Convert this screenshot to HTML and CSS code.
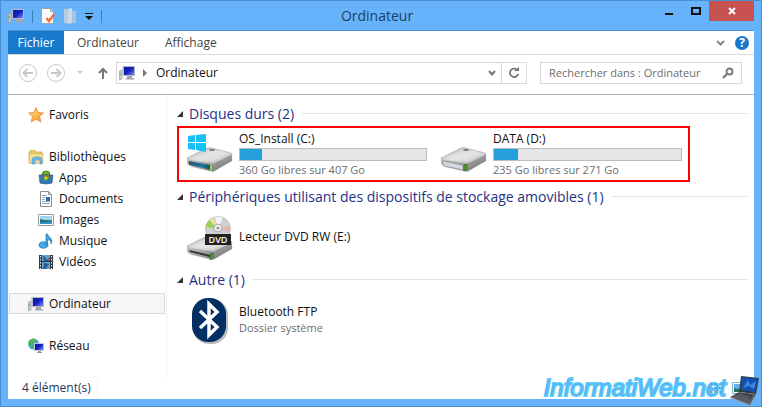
FILE: index.html
```
<!DOCTYPE html>
<html lang="fr">
  <head>
    <meta charset="UTF-8" />
    <meta name="viewport" content="width=device-width, initial-scale=1.0" />
    <title>Ordinateur</title>
    <link rel="stylesheet" href="styles.css">
  </head>
  <body>
    <!-- Shared icons -->
    <svg class="defs" aria-hidden="true">
      <defs>
        <linearGradient id="screen" x1="0" y1="0" x2="1" y2="1">
          <stop offset="0" stop-color="#0a1c9c" />
          <stop offset="0.5" stop-color="#1420c4" />
          <stop offset="1" stop-color="#7c8cf0" />
        </linearGradient>
        <linearGradient id="metal" x1="0" y1="0" x2="1" y2="1">
          <stop offset="0" stop-color="#a8a8a8" />
          <stop offset="0.5" stop-color="#e4e4e4" />
          <stop offset="1" stop-color="#b4b4b4" />
        </linearGradient>
        <linearGradient id="side" x1="0" y1="0" x2="1" y2="1">
          <stop offset="0" stop-color="#d0d0d0" />
          <stop offset="1" stop-color="#6c6c6c" />
        </linearGradient>
        <linearGradient id="glass" x1="0" y1="0" x2="1" y2="0">
          <stop offset="0" stop-color="#2b5468" />
          <stop offset="0.6" stop-color="#1878a0" />
          <stop offset="1" stop-color="#184838" />
        </linearGradient>
        <linearGradient id="gold" x1="0" y1="0" x2="1" y2="1">
          <stop offset="0" stop-color="#ffe98a" />
          <stop offset="1" stop-color="#f78c1e" />
        </linearGradient>
      </defs>
      <symbol id="pc" viewBox="0 0 16 16">
        <rect x="3.500" y="1" width="12.500" height="10" fill="#b4b8c0" />
        <rect x="5" y="2" width="10" height="8" fill="url(#screen)" />
        <path d="M8 11h5v2h2v1.500H7V13h1z" fill="#a0a4ac" />
        <path d="M.5 6 3 5v9L.5 15z" fill="#c8ccd0" stroke="#888" stroke-width=".5" />
        <path d="M1 8v2" stroke="#3cb43c" />
      </symbol>
      <symbol id="drive" viewBox="0 0 48 26">
        <path d="M4 20 28 25 47 13 45 9z" fill="#ccc" opacity=".7" />
        <path d="M1 11 21 1Q23 0 26 1L45 6Q47 7 45 9L29 16Q27 17 24 16L3 13Q1 12 1 11z" fill="url(#metal)" stroke="#999" stroke-width=".5" />
        <path d="M1 11.500Q2 13 6 13.500L25 16.500Q28 17 30 15.500L46 7.500V14L29 23.500Q27 25 24 24L4 19Q1 18 1 16z" fill="url(#side)" />
        <path d="M6 11 23 2.500 41 7 27 14z" fill="#e4e4e4" opacity=".65" />
        <ellipse cx="26" cy="3" rx="3" ry="1" fill="#777" />
      </symbol>
    </svg>

    <div class="window">
      <header class="titlebar">
        <div class="quick-access">
          <svg width="16" height="16"><use href="#pc" /></svg>
          <span class="separator"></span>
          <button type="button" aria-label="Propriétés">
            <svg width="14" height="16" viewBox="0 0 14 16">
              <path d="M.5.500h9l3 3v12H.5z" fill="#fafafa" stroke="#98a4b0" />
              <path d="M9.500.500v3h3" fill="#ddd" stroke="#98a4b0" />
              <path d="M5.500 10 8 13 13 6.500" fill="none" stroke="#f07038" stroke-width="2.500" />
            </svg>
          </button>
          <button type="button" aria-label="Nouveau dossier">
            <svg width="14" height="16" viewBox="0 0 14 16">
              <path d="M1 1h5v14H1z" fill="#b9cbdf" />
              <path d="M5 1 9 0v15l-4 1z" fill="#cbdaea" />
              <path d="M9 3h4v12H9z" fill="#a9c3df" />
            </svg>
          </button>
          <button type="button" aria-label="Personnaliser">
            <svg width="8" height="7" viewBox="0 0 8 7">
              <path d="M0 0h8v1H0zM0 3h8L4 7z" fill="#111" />
            </svg>
          </button>
          <span class="separator"></span>
        </div>
        <h1>Ordinateur</h1>
        <div class="window-buttons">
          <button type="button" aria-label="Réduire">
            <svg width="8" height="10"><path d="M0 7h8v2H0z" fill="#111" /></svg>
          </button>
          <button type="button" aria-label="Agrandir">
            <svg width="10" height="8"><path d="M1 1h8v6H1z" fill="none" stroke="#111" stroke-width="2" /></svg>
          </button>
          <button type="button" class="close" aria-label="Fermer">
            <svg width="8" height="8" viewBox="0 0 8 8"><path d="m1 1 6 6M7 1 1 7" stroke="#fff" stroke-width="2" /></svg>
          </button>
        </div>
      </header>

      <div class="client">
        <nav class="ribbon">
          <button type="button" class="file">Fichier</button>
          <button type="button" class="tab">Ordinateur</button>
          <button type="button" class="tab">Affichage</button>
          <button type="button" class="expand" aria-label="Développer le ruban">
            <svg width="9" height="6" viewBox="0 0 9 6"><path d="m1 1 3.500 3.500L8 1" fill="none" stroke="#888" stroke-width="2" /></svg>
          </button>
          <button type="button" class="help" aria-label="Aide">?</button>
        </nav>

        <div class="toolbar">
          <button type="button" aria-label="Précédent">
            <svg width="20" height="20" viewBox="0 0 20 20" fill="none" stroke="#c8c8c8">
              <circle cx="10" cy="10" r="8.500" />
              <path d="M15 10H6M9.500 6 5.500 10l4 4" stroke-width="2" />
            </svg>
          </button>
          <button type="button" aria-label="Suivant">
            <svg width="20" height="20" viewBox="0 0 20 20" fill="none" stroke="#c8c8c8">
              <circle cx="10" cy="10" r="8.500" />
              <path d="M5 10h9M10.500 6l4 4-4 4" stroke-width="2" />
            </svg>
          </button>
          <button type="button" class="recent" aria-label="Emplacements récents">
            <svg width="8" height="4"><path d="M1 0h6L4 3z" fill="#c8c8c8" /></svg>
          </button>
          <button type="button" aria-label="Niveau supérieur">
            <svg width="10" height="12" viewBox="0 0 10 12"><path d="M5 12V2M1 6l4-4 4 4" fill="none" stroke="#777" stroke-width="2" /></svg>
          </button>
          <div class="address">
            <svg width="16" height="16"><use href="#pc" /></svg>
            <svg width="5" height="8"><path d="M0 0v8l4-4z" fill="#777" /></svg>
            <a href="#">Ordinateur</a>
            <button type="button" aria-label="Adresses précédentes">
              <svg width="8" height="7" viewBox="0 0 8 7"><path d="m1 1 3 3.500L7 1" fill="none" stroke="#777" stroke-width="2" /></svg>
            </button>
            <button type="button" class="refresh" aria-label="Actualiser">
              <svg width="12" height="12" viewBox="0 0 12 12">
                <path d="M8.500 2.300A4.200 4.200 0 1 0 10.200 7" fill="none" stroke="#777" stroke-width="1.800" />
                <path d="M6 4h5V0z" fill="#777" />
              </svg>
            </button>
          </div>
          <div class="search">
            <input type="text" aria-label="Rechercher" placeholder="Rechercher dans : Ordinateur" />
            <svg width="12" height="12" viewBox="0 0 12 12" fill="none" stroke="#777">
              <circle cx="7.500" cy="4.500" r="3" stroke-width="1.800" />
              <path d="M5.500 6.500 1 11" stroke-width="2.200" />
            </svg>
          </div>
        </div>

        <div class="content">
          <aside>
            <ul>
              <li>
                <a href="#">
                  <svg width="16" height="16" viewBox="0 0 16 16"><path d="M8 .5 10.200 5.500l5.300.5-4 3.500 1.500 5.500L8 12.200 3.200 15l1.300-5.500-4-3.500 5.300-.5z" fill="url(#gold)" stroke="#ee8434" stroke-width=".8" /></svg>
                  Favoris
                </a>
              </li>
            </ul>
            <ul>
              <li>
                <a href="#">
                  <svg width="16" height="16" viewBox="0 0 16 16">
                    <path d="M1 3 2 1.500h5L8 3h6v11H1z" fill="#ecc968" stroke="#c49c40" stroke-width=".6" />
                    <path d="M2 5h13v9H1z" fill="#f6e29c" stroke="#d4b058" stroke-width=".6" />
                    <path d="M4 15v-4q0-3 4-3h3q3 0 3 3v4h-2v-4H7v4z" fill="#70b8e8" stroke="#4490cc" stroke-width=".6" />
                  </svg>
                  Bibliothèques
                </a>
              </li>
              <li class="sub">
                <a href="#">
                  <svg width="16" height="16" viewBox="0 0 16 16">
                    <path d="M4 5q0-4 4-4t4 4z" fill="#76b82c" stroke="#437c24" />
                    <path d="M1 5h14l-1 8q-6 2-12 0z" fill="#3478b4" stroke="#205888" stroke-width=".6" />
                    <path d="m8 5 4 3-4 3-4-3z" fill="#46a032" />
                    <circle cx="8" cy="8" r="1.500" fill="#f4d434" />
                    <path d="M5 5h2v2H5zM9 5h2v2H9z" fill="#d05028" />
                  </svg>
                  Apps
                </a>
              </li>
              <li class="sub">
                <a href="#">
                  <svg width="16" height="16" viewBox="0 0 16 16">
                    <path d="M2.500.500h8l3 3v12h-11z" fill="#fff" stroke="#8c8c8c" />
                    <path d="M10.500.500v3h3" fill="none" stroke="#8c8c8c" />
                    <path d="M4 4.500h5M4 6.500h3M4 8.500h3M4 10.500h8M4 12.500h8" stroke="#98a8b8" />
                    <path d="M8 6h4v4H8z" fill="#2868a8" />
                  </svg>
                  Documents
                </a>
              </li>
              <li class="sub">
                <a href="#">
                  <svg width="16" height="16" viewBox="0 0 16 16">
                    <path d="M.5 2.500h15v11H.5z" fill="#fff" stroke="#999" />
                    <path d="M2 4h12v8H2z" fill="#a0d4ec" />
                    <path d="M2 7q6 2 12 1v4H2z" fill="#24706c" />
                    <path d="M2 10q6 1 12-1v3H2z" fill="#2c94cc" />
                  </svg>
                  Images
                </a>
              </li>
              <li class="sub">
                <a href="#">
                  <svg width="16" height="16" viewBox="0 0 16 16">
                    <ellipse cx="5.500" cy="12" rx="4.500" ry="3.200" fill="#44a8e4" stroke="#2474b8" stroke-width=".7" />
                    <path d="M8 1h1.500q.5 2.500 3 4 2.500 2.500.5 6 .5-3.500-3.500-4.500V12H8z" fill="#44a8e4" stroke="#2474b8" stroke-width=".7" />
                  </svg>
                  Musique
                </a>
              </li>
              <li class="sub">
                <a href="#">
                  <svg width="16" height="16" viewBox="0 0 16 16">
                    <path d="M1 1h14v14H1z" fill="#303840" />
                    <path d="M4 1h8v6H4zM4 8h8v7H4z" fill="#5ca4d4" />
                    <path d="M5 2q3 0 3 4l4-3v4H6zM6 9l5 1-3 5H5z" fill="#245c90" />
                    <path d="m9 4 3 1-2 2zM9 11l2 2-2 1z" fill="#cc684c" />
                    <path d="M2.500 2v13M13.500 2v13" stroke="#eee" stroke-dasharray="1.500 1.500" />
                  </svg>
                  Vidéos
                </a>
              </li>
            </ul>
            <ul>
              <li class="selected">
                <a href="#"><svg width="16" height="16"><use href="#pc" /></svg>Ordinateur</a>
              </li>
            </ul>
            <ul>
              <li>
                <a href="#">
                  <svg width="16" height="16" viewBox="0 0 16 16">
                    <circle cx="5.500" cy="6" r="5.500" fill="#44a4dc" />
                    <path d="M2 2q4-3 6 0L5 5 3 8 0 6zM5 7l3 1-1 3-3-1z" fill="#54b83c" />
                    <path d="M6 5h10v8H6z" fill="#c4c8d0" />
                    <path d="M7 6h8v6H7z" fill="url(#screen)" />
                    <path d="M10 13h3v1h1v1H9v-1h1z" fill="#999" />
                  </svg>
                  Réseau
                </a>
              </li>
            </ul>
          </aside>

          <main>
            <section>
              <h2>Disques durs (2)</h2>
              <div class="items highlighted">
                <article class="item">
                  <svg width="48" height="48" viewBox="0 0 48 48">
                    <use href="#drive" y="17" width="48" height="26" />
                    <path d="M3 31 24 35q2 1 2 3v2L4 35q-2-1-1-4z" fill="url(#glass)" />
                    <path d="m24 35 2-1v6l-2 1z" fill="#8cdc20" />
                    <path d="m2 6 7-1v7H2zM10 5l10-1v8H10zM2 13h7v7l-7-1zM10 13h10v9l-10-2z" fill="#18c0f8" />
                  </svg>
                  <div class="details">
                    <h3>OS_Install (C:)</h3>
                    <div class="bar"><span style="width: 12%"></span></div>
                    <p>360 Go libres sur 407 Go</p>
                  </div>
                </article>
                <article class="item">
                  <svg width="48" height="48" viewBox="0 0 48 48">
                    <use href="#drive" y="17" width="48" height="26" />
                    <path d="m3 31 20 4v5L4 36q-2-2-1-5z" fill="#d4d8e0" stroke="#888" stroke-width=".7" />
                    <path d="m24 35 3-1v5l-3 2z" fill="#48a81c" stroke="#333" stroke-width=".5" />
                  </svg>
                  <div class="details">
                    <h3>DATA (D:)</h3>
                    <div class="bar"><span style="width: 13%"></span></div>
                    <p>235 Go libres sur 271 Go</p>
                  </div>
                </article>
              </div>
            </section>

            <section>
              <h2>Périphériques utilisant des dispositifs de stockage amovibles (1)</h2>
              <div class="items">
                <article class="item">
                  <svg width="48" height="48" viewBox="0 0 48 48">
                    <use href="#drive" y="22" width="48" height="26" />
                    <path d="m3 37 21 5v2L4 39z" fill="#333" />
                    <path d="m24 41 3-1v5l-3 2z" fill="#48a81c" stroke="#333" stroke-width=".5" />
                    <circle cx="32" cy="16" r="12.500" fill="#d0d0d0" stroke="#aaa" stroke-width=".6" />
                    <path d="M32 16 19.500 14q1-5 4-7z" fill="#9cd058" />
                    <path d="m32 16-8-9 3-2z" fill="#f0e890" />
                    <path d="m32 16 12-4v7z" fill="#e4b8a8" />
                    <path d="m32 16-3-12q4-1 8 1z" fill="#f4f4f4" />
                    <circle cx="32" cy="15" r="4" fill="#eee" stroke="#aaa" />
                    <circle cx="32" cy="15" r="1.500" fill="#999" />
                    <path d="M19 21h26v11H19z" fill="#222" />
                    <text x="32" y="30" class="disc-label">DVD</text>
                  </svg>
                  <div class="details">
                    <h3>Lecteur DVD RW (E:)</h3>
                  </div>
                </article>
              </div>
            </section>

            <section>
              <h2>Autre (1)</h2>
              <div class="items">
                <article class="item">
                  <svg width="48" height="48" viewBox="0 0 48 48">
                    <rect x="7" y="3" width="35" height="45" rx="16" fill="#bbb" />
                    <rect x="6" y="2" width="34" height="44" rx="16" fill="#042f64" />
                    <path d="m14 15 17 16-8 8V8l8 8-17 16" fill="none" stroke="#fff" stroke-width="3.500" />
                  </svg>
                  <div class="details">
                    <h3>Bluetooth FTP</h3>
                    <p>Dossier système</p>
                  </div>
                </article>
              </div>
            </section>
          </main>
        </div>

        <footer>
          <span>4 élément(s)</span>
          <div class="views">
            <button type="button" aria-label="Détails">
              <svg width="15" height="12" viewBox="0 0 15 12">
                <path d="M1 1h2v2H1zM1 5h2v2H1zM1 9h2v2H1z" fill="#fff" stroke="#555" stroke-width=".7" />
                <path d="M5 2h4M10 2h4M5 6h4M10 6h4M5 10h4M10 10h4" stroke="#222" />
              </svg>
            </button>
            <button type="button" aria-label="Grandes icônes">
              <svg width="15" height="12" viewBox="0 0 15 12">
                <path d="M.5.500h14v11H.5z" fill="#fff" stroke="#7cb4dc" />
                <path d="M2 2h11v8H2z" fill="#68b0e8" />
                <path d="M2 6q6 2 11 1v3H2z" fill="#247058" />
              </svg>
            </button>
          </div>
        </footer>
      </div>

      <div class="watermark">
        <span>InformatiWeb.net</span>
        <svg width="32" height="30" viewBox="0 0 32 30">
          <path d="m12 0 18 2-3 16-17-2z" fill="#303844" />
          <path d="m13 1 16 2-3 13-14-2z" fill="#1450b0" />
          <path d="m14 12 5-8 2 5 6-4-2 8-5-3z" fill="#3c88dc" />
          <path d="m10 16 17 2-6 11-20-8z" fill="#585c64" />
          <path d="m10 17 14 2-3 4-15-4z" fill="#32363c" />
          <path d="m10 18 12 3M8 19l12 3" stroke="#888" stroke-width=".6" />
          <path d="m1 21 20 8 6-11v2l-6 10L1 22z" fill="#989ca4" />
        </svg>
      </div>
    </div>
  </body>
</html>
```

FILE: styles.css
```
* {
  box-sizing: border-box;
}

body {
  margin: 0;
  font-family: "Open Sans", "Noto Sans", sans-serif;
  font-size: 12px;
  line-height: 16px;
  color: #111;
}

h1,
h2,
h3,
p,
ul {
  margin: 0;
  padding: 0;
  font-weight: normal;
}

a {
  color: inherit;
  text-decoration: none;
}

svg {
  display: block;
  flex-shrink: 0;
}

button {
  display: flex;
  align-items: center;
  justify-content: center;
  padding: 0;
  border: none;
  background: none;
  color: inherit;
  font: inherit;
}

.defs {
  position: absolute;
  width: 0;
  height: 0;
}

/* Window frame */
.window {
  position: relative;
  display: flex;
  flex-direction: column;
  min-height: 100vh;
  padding: 0 7px 7px;
  border: 1px solid #4a8fcf;
  background-color: #66b3fc;
}

.titlebar {
  display: grid;
  grid-template-columns: 1fr auto 1fr;
  height: 29px;
}

.titlebar h1 {
  padding-right: 8px;
  font-size: 14px;
  line-height: 30px;
  color: #1d3f60;
}

.quick-access {
  display: flex;
  align-items: center;
  gap: 8px;
}

.separator {
  width: 1px;
  height: 13px;
  background-color: #3f7fbe;
}

.window-buttons {
  display: flex;
  justify-content: flex-end;
  height: 20px;
}

.window-buttons button {
  width: 27px;
}

.window-buttons .close {
  width: 45px;
  background-color: #c75050;
}

.client {
  display: flex;
  flex: 1;
  flex-direction: column;
  border-top: 1px solid #4a94dc;
  background-color: #fff;
}

/* Ribbon tabs */
.ribbon {
  display: flex;
  align-items: center;
  height: 24px;
  padding-right: 5px;
  border-bottom: 1px solid #dadbdc;
  color: #444;
}

.ribbon .file {
  width: 56px;
  height: 23px;
  background-color: #1979ca;
  color: #fff;
}

.ribbon .tab {
  padding: 0 13px;
}

.ribbon .expand {
  margin-left: auto;
}

.ribbon .help {
  width: 14px;
  height: 14px;
  margin-left: 10px;
  border-radius: 50%;
  background-color: #1979ca;
  color: #fff;
  font-weight: bold;
}

/* Navigation and address */
.toolbar {
  display: flex;
  align-items: center;
  gap: 8px;
  height: 40px;
  padding: 0 12px 3px 10px;
  border-bottom: 1px solid #b4b4b4;
}

.toolbar .recent {
  margin: 0 6px 0 2px;
}

.address,
.search {
  display: flex;
  align-items: center;
  height: 22px;
  border: 1px solid #d9d9d9;
}

.address {
  flex: 1;
  gap: 8px;
  padding-left: 2px;
}

.address button {
  margin-left: auto;
}

.address .refresh {
  width: 25px;
  height: 20px;
  margin-left: -3px;
  border-left: 1px solid #d9d9d9;
}

.search {
  flex: 0 0 202px;
  margin-left: 5px;
  padding: 0 7px 0 8px;
}

.search input {
  flex: 1;
  min-width: 0;
  padding: 0;
  border: none;
  outline: none;
  background: none;
  font: inherit;
  font-size: 11px;
}

.search input::placeholder {
  color: #6d6d6d;
  opacity: 1;
}

/* Folder tree */
.content {
  display: flex;
  flex: 1;
}

aside {
  display: flex;
  flex: 0 0 159px;
  flex-direction: column;
  gap: 21px;
  padding: 9px 1px 20px;
  border-right: 1px solid #f2f2f2;
}

aside ul {
  list-style: none;
}

aside a {
  display: flex;
  align-items: center;
  gap: 5px;
  height: 21px;
  padding-left: 19px;
}

aside .sub a {
  padding-left: 29px;
}

aside .selected {
  background-color: #f6f6f6;
  box-shadow: inset 0 0 0 1px #dadada;
}

/* Drives and devices */
main {
  display: flex;
  flex: 1;
  flex-direction: column;
  gap: 3px;
  padding: 7px 7px 20px 10px;
}

h2 {
  display: flex;
  align-items: center;
  height: 24px;
  padding-bottom: 1px;
  font-size: 14px;
  color: #1e3287;
  white-space: nowrap;
}

h2::before {
  content: "";
  margin-right: 6px;
  border-bottom: 6px solid #333;
  border-left: 6px solid transparent;
}

h2::after {
  content: "";
  flex: 1;
  height: 1px;
  margin-left: 8px;
  background-color: #e2e2e2;
}

.items {
  display: flex;
  width: fit-content;
  gap: 6px;
  height: 56px;
  border: 2px solid transparent;
}

.highlighted {
  border-color: #f00;
}

.item {
  display: flex;
  align-items: center;
  gap: 5px;
  width: 248px;
  padding-left: 7px;
}

.highlighted .item:last-child {
  width: 255px;
}

.details {
  width: 189px;
}

.details h3 {
  font-size: 12px;
}

.details p {
  font-size: 11px;
  color: #6d6d6d;
}

.bar {
  height: 13px;
  margin: 1px 0;
  border: 1px solid #bcbcbc;
  background-color: #e6e6e6;
}

.bar span {
  display: block;
  height: 100%;
  background-color: #26a0da;
}

.disc-label {
  fill: #fff;
  font-size: 9px;
  font-weight: 600;
  text-anchor: middle;
}

/* Status bar */
footer {
  display: flex;
  align-items: center;
  justify-content: space-between;
  height: 22px;
  padding: 0 7px 0 14px;
  color: #1e395b;
}

footer span {
  padding-right: 6px;
  border-right: 1px solid #f2f2f2;
}

.views {
  display: flex;
  gap: 8px;
}

.watermark {
  position: absolute;
  right: 0;
  bottom: 0;
  display: flex;
  gap: 3px;
  font-family: "Liberation Sans", Arial, sans-serif;
  font-size: 24px;
  font-style: italic;
  line-height: 24px;
  color: #52acf8;
}

.watermark span {
  opacity: 0.9;
  -webkit-text-stroke: 2px #40ccf8;
  paint-order: stroke fill;
}
```
